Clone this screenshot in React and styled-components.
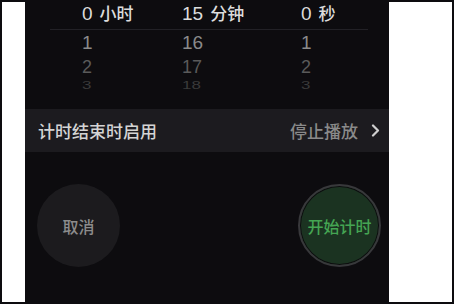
import React from 'react'
import styled, { createGlobalStyle } from 'styled-components'

const GlobalStyle = createGlobalStyle`
    html, body {
        margin: 0;
        padding: 0;
        background: #0d0c0f;
    }
    body {
        font-family: "Liberation Sans", "Noto Sans CJK SC", sans-serif;
    }
`

const Frame = styled.div`
    width: 454px;
    height: 304px;
    display: flex;
    background: #0d0c0f;
    overflow: hidden;
`

const Side = styled.div`
    width: ${p => p.$width}px;
    margin: ${p => p.$left ? '2px 0 2px 2px' : '2px 2px 2px 0'};
    background: #ffffff;
`

const Screen = styled.div`
    width: 364px;
    display: flex;
    flex-direction: column;
    background: #0d0c0f;
`

const Picker = styled.div`
    height: 109px;
    display: flex;
    flex-direction: column;
`

const PickerRow = styled.div`
    display: grid;
    grid-template-columns: 100px 119px 1fr;
    margin: 0 21px 0 25px;
    padding-left: 32px;
    height: ${p => p.$height}px;
    line-height: ${p => p.$line || p.$height}px;
`

const HeaderRow = styled(PickerRow)`
    border-bottom: 1px solid #222126;
    color: #dcdcdc;
`

const Cell = styled.div`
    display: flex;
    align-items: baseline;
    white-space: nowrap;
`

const Num = styled.span`
    font-size: ${p => p.$size || 19}px;
    color: ${p => p.$color || 'inherit'};
    display: inline-block;
    transform: scaleY(${p => p.$squash || 1});
    transform-origin: center;
`

const Unit = styled.span`
    margin-left: 7px;
    font-family: "Noto Sans CJK SC", sans-serif;
    font-size: 17px;
    font-weight: 500;
`

const Setting = styled.div`
    height: 43px;
    display: flex;
    align-items: center;
    justify-content: space-between;
    padding: 0 9px 0 13px;
    background: #1c1b1f;
    font-family: "Noto Sans CJK SC", sans-serif;
    font-size: 17px;
    font-weight: 500;
`

const SettingLabel = styled.span`
    color: #d4d4d4;
`

const SettingValue = styled.div`
    display: flex;
    align-items: center;
    gap: 13px;
    color: #8a8a8a;
`

const Buttons = styled.div`
    display: flex;
    justify-content: space-between;
    padding: 0 8px 0 12px;
    margin-top: 32px;
`

const Round = styled.div`
    width: 83px;
    height: 83px;
    border-radius: 50%;
    display: flex;
    align-items: center;
    justify-content: center;
    box-sizing: border-box;
    font-family: "Noto Sans CJK SC", sans-serif;
    font-size: 16px;
    font-weight: 500;
    background: ${p => p.$start ? '#1b3321' : '#1c1b1e'};
    color: ${p => p.$start ? '#45a553' : '#8c8c8c'};
    border: ${p => p.$start ? '2px solid #38383b' : 'none'};
    box-shadow: ${p => p.$start ? 'inset 0 0 0 1px #0d0c0f' : 'none'};
`

const Chevron = () => (
    <svg width="9" height="13" viewBox="0 0 9 13">
        <path d="M2 1.5 L7 6.5 L2 11.5" fill="none" stroke="#cfcfcf" strokeWidth="2.2" strokeLinecap="round" strokeLinejoin="round" />
    </svg>
)

const rows = [
    { values: ['1', '16', '1'], color: '#8a8a8a', size: 19, height: 25 },
    { values: ['2', '17', '2'], color: '#5a5a5a', size: 18, height: 25 },
    { values: ['3', '18', '3'], color: '#3a3a3a', size: 17, height: 12, squash: 0.6 },
]

const App = () => {
    return (
        <Frame>
            <GlobalStyle />
            <Side $left $width={23} />
            <Screen>
                <Picker>
                    <HeaderRow $height={29} $line={25}>
                        <Cell><Num>0</Num><Unit>小时</Unit></Cell>
                        <Cell><Num>15</Num><Unit>分钟</Unit></Cell>
                        <Cell><Num>0</Num><Unit>秒</Unit></Cell>
                    </HeaderRow>
                    {rows.map((r, i) => (
                        <PickerRow key={i} $height={r.height}>
                            {r.values.map((v, j) => (
                                <Cell key={j}>
                                    <Num $color={r.color} $size={r.size} $squash={r.squash}>{v}</Num>
                                </Cell>
                            ))}
                        </PickerRow>
                    ))}
                </Picker>
                <Setting>
                    <SettingLabel>计时结束时启用</SettingLabel>
                    <SettingValue>
                        停止播放
                        <Chevron />
                    </SettingValue>
                </Setting>
                <Buttons>
                    <Round>取消</Round>
                    <Round $start>开始计时</Round>
                </Buttons>
            </Screen>
            <Side $width={63} />
        </Frame>
    )
}

export default App
